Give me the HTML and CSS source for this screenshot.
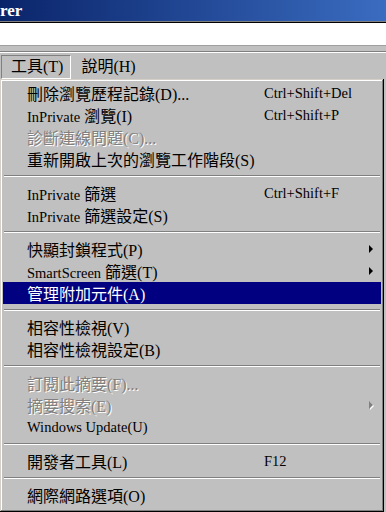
FILE: index.html
```html
<!DOCTYPE html>
<html lang="zh-Hant">
  <head>
    <meta charset="UTF-8" />
    <meta name="viewport" content="width=device-width, initial-scale=1.0" />
    <title>Internet Explorer - 工具</title>
    <link rel="stylesheet" href="styles.css">
  </head>
  <body>
    <div class="titlebar"><span class="title">rer</span></div>
    <div class="address"></div>
    <div class="band"></div>

    <div class="menubar">
      <span class="menu open">工具(T)</span>
      <span class="menu">說明(H)</span>
    </div>

    <ul class="dropdown">
      <li class="item">
        <span class="label">刪除瀏覽歷程記錄(D)...</span>
        <span class="key">Ctrl+Shift+Del</span>
      </li>
      <li class="item">
        <span class="label"><span class="en">InPrivate</span> 瀏覽(I)</span>
        <span class="key">Ctrl+Shift+P</span>
      </li>
      <li class="item disabled">
        <span class="label">診斷連線問題(C)...</span>
      </li>
      <li class="item">
        <span class="label">重新開啟上次的瀏覽工作階段(S)</span>
      </li>
      <li class="sep"></li>
      <li class="item">
        <span class="label"><span class="en">InPrivate</span> 篩選</span>
        <span class="key">Ctrl+Shift+F</span>
      </li>
      <li class="item">
        <span class="label"><span class="en">InPrivate</span> 篩選設定(S)</span>
      </li>
      <li class="sep"></li>
      <li class="item">
        <span class="label">快顯封鎖程式(P)</span>
        <span class="arrow"></span>
      </li>
      <li class="item">
        <span class="label"><span class="en">SmartScreen</span> 篩選(T)</span>
        <span class="arrow"></span>
      </li>
      <li class="item active">
        <span class="label">管理附加元件(A)</span>
      </li>
      <li class="sep"></li>
      <li class="item">
        <span class="label">相容性檢視(V)</span>
      </li>
      <li class="item">
        <span class="label">相容性檢視設定(B)</span>
      </li>
      <li class="sep"></li>
      <li class="item disabled">
        <span class="label">訂閱此摘要(F)...</span>
      </li>
      <li class="item disabled">
        <span class="label">摘要搜索(E)</span>
        <span class="arrow"></span>
      </li>
      <li class="item">
        <span class="label"><span class="en">Windows Update(U)</span></span>
      </li>
      <li class="sep"></li>
      <li class="item">
        <span class="label">開發者工具(L)</span>
        <span class="key">F12</span>
      </li>
      <li class="sep"></li>
      <li class="item">
        <span class="label">網際網路選項(O)</span>
      </li>
    </ul>
  </body>
</html>
```

FILE: styles.css
```css
body {
  margin: 0;
  width: 386px;
  height: 512px;
  overflow: hidden;
  background-color: #c0c0c0;
  font-family: "Liberation Serif", "Noto Sans CJK TC", serif;
  font-size: 16px;
  color: #000;
}
.titlebar {
  height: 21px;
  background: linear-gradient(to right, #0a246a, #3a6cc0);
  border-bottom: 1px solid #808080;
  box-shadow: 0 1px #000;
}
.title {
  display: block;
  line-height: 21px;
  color: #fff;
  font-weight: bold;
  font-size: 17px;
}
.address {
  height: 22px;
  margin-top: 1px;
  background-color: #fff;
}
.band {
  height: 5px;
  border-top: 1px solid #a0a0a0;
  border-bottom: 1px solid #808080;
}
.menubar {
  display: flex;
  height: 24px;
  padding: 2px 0 0 1px;
  border-top: 1px solid #fff;
}
.menu {
  height: 22px;
  line-height: 22px;
  padding: 0 7px 0 9px;
  border: 1px solid transparent;
}
.menu.open {
  border-color: #808080 #fff #fff #808080;
}
.dropdown {
  list-style: none;
  margin: 0;
  padding: 3px;
  width: 384px;
  height: 433px;
  box-sizing: border-box;
  background-color: #c0c0c0;
  box-shadow: inset -1px -1px #000, inset 1px 1px #d4d0c8, inset -2px -2px #808080, inset 2px 2px #fff;
}
.item {
  display: flex;
  align-items: center;
  height: 22px;
  padding-left: 24px;
  white-space: nowrap;
}
.label {
  width: 237px;
}
.key,
.en {
  font-size: 14.5px;
}
.key {
  flex: 1;
}
.arrow {
  margin-left: auto;
  margin-right: 8px;
  width: 0;
  height: 0;
  border-left: 4px solid #000;
  border-top: 4px solid transparent;
  border-bottom: 4px solid transparent;
}
.item.active {
  background-color: #000080;
  color: #fff;
}
.item.disabled {
  color: #808080;
  text-shadow: 1px 1px 0 #fff;
}
.item.disabled .arrow {
  border-left-color: #808080;
  filter: drop-shadow(1px 1px 0 #fff);
}
.sep {
  height: 0;
  margin: 5px 1px;
  border-top: 1px solid #808080;
  border-bottom: 1px solid #fff;
}
```
